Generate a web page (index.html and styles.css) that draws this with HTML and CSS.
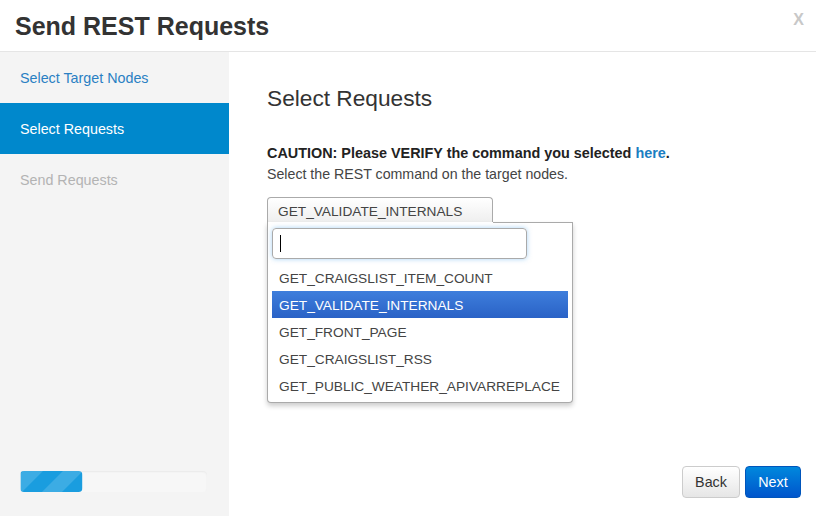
FILE: index.html
```html
<!DOCTYPE html>
<html>
<head>
<meta charset="utf-8">
<link rel="stylesheet" href="styles.css">
</head>
<body>
<div class="modal">
  <div class="header">
    <h1 class="title">Send REST Requests</h1>
    <span class="close">x</span>
  </div>
  <div class="body">
    <div class="sidebar">
      <div class="steps">
        <div class="step done">Select Target Nodes</div>
        <div class="step active">Select Requests</div>
        <div class="step todo">Send Requests</div>
      </div>
      <div class="progress"><div class="bar" style="width:33.4%"></div></div>
    </div>
    <div class="main">
      <h2 class="heading">Select Requests</h2>
      <p class="caution">CAUTION: Please VERIFY the command you selected <a class="link">here</a>.</p>
      <p class="hint">Select the REST command on the target nodes.</p>
      <div class="select">
        <div class="select-box">GET_VALIDATE_INTERNALS</div>
        <div class="drop">
          <div class="search"><span class="caret"></span></div>
          <ul class="options">
            <li>GET_CRAIGSLIST_ITEM_COUNT</li>
            <li class="hl">GET_VALIDATE_INTERNALS</li>
            <li>GET_FRONT_PAGE</li>
            <li>GET_CRAIGSLIST_RSS</li>
            <li>GET_PUBLIC_WEATHER_APIVARREPLACE</li>
          </ul>
        </div>
      </div>
      <div class="footer">
        <button class="btn back">Back</button>
        <button class="btn next">Next</button>
      </div>
    </div>
  </div>
</div>
</body>
</html>
```
FILE: styles.css
```css
html, body { margin: 0; padding: 0; }
body {
  width: 820px; height: 516px; overflow: hidden;
  font-family: "Liberation Sans", Arial, sans-serif;
  background: #fff; color: #333;
}
.modal { width: 816px; height: 516px; display: flex; flex-direction: column; }
.header {
  height: 51px; border-bottom: 1px solid #e5e5e5;
  display: flex; align-items: center; justify-content: space-between;
  padding: 0 12px 0 15px; box-sizing: content-box;
}
.title { margin: 0; font-size: 25px; font-weight: bold; color: #333; padding-top: 1px; }
.close { font-size: 16px; font-weight: bold; color: #c8c8c8; text-transform: uppercase; align-self: flex-start; margin-top: 11px; }
.body { flex: 1; display: flex; min-height: 0; }
.sidebar {
  width: 229px; background: #f4f4f4;
  display: flex; flex-direction: column; justify-content: space-between;
}
.step { height: 51px; line-height: 52px; padding-left: 20px; font-size: 14.3px; }
.step.done { color: #2a80c3; }
.step.active { background: #0088cc; color: #fff; }
.step.todo { color: #b3b3b3; }
.progress {
  margin: 0 22px 24px 20px; height: 21px; border-radius: 4px;
  background: #f7f7f7; box-shadow: inset 0 1px 2px rgba(0,0,0,0.06);
  overflow: hidden;
}
.bar {
  height: 100%; border-radius: 4px 0 0 4px;
  background-color: #1a9ddf;
  background-image: linear-gradient(45deg, rgba(255,255,255,0.15) 25%, transparent 25%, transparent 50%, rgba(255,255,255,0.15) 50%, rgba(255,255,255,0.15) 75%, transparent 75%, transparent);
  background-size: 40px 40px;
  transform: scaleX(-1);
}
.main { flex: 1; padding-left: 38px; display: flex; flex-direction: column; position: relative; }
.heading { margin: 33px 0 0; font-size: 22.7px; font-weight: normal; color: #333; line-height: 26px; }
.caution { margin: 33px 0 0; font-size: 14.4px; font-weight: bold; line-height: 18px; color: #222; }
.link { color: #1a7ec2; }
.hint { margin: 3px 0 0; font-size: 14.2px; color: #444; line-height: 18px; }
.select { position: relative; margin-top: 14px; width: 226px; }
.select-box {
  height: 25px; line-height: 28px; padding-left: 10px; font-size: 13.7px; color: #444;
  border: 1px solid #aaa; border-bottom: none; border-radius: 4px 4px 0 0;
  background: linear-gradient(#fff, #eee);
}
.drop {
  position: absolute; left: 0; top: 25px; width: 304px; height: 180px;
  border: 1px solid #aaa; border-top: none; border-radius: 0 0 4px 4px;
  background: #fff; box-shadow: 0 3px 5px rgba(0,0,0,0.2);
}
.drop::before {
  content: ""; position: absolute; left: 225px; right: -1px; top: 0; border-top: 1px solid #aaa;
}
.search {
  margin: 6px 0 0 4px; width: 253px; height: 29px; border: 1px solid #aaa; border-radius: 4px;
  box-shadow: 0 0 5px rgba(82,168,236,0.5);
  display: flex; align-items: center;
}
.caret { display: block; width: 1px; height: 17px; background: #000; margin-left: 7px; }
.options { list-style: none; margin: 5px 0 0 4px; padding: 0; width: 296px; }
.options li { height: 27px; line-height: 29px; padding-left: 7px; font-size: 13.7px; color: #444; overflow: hidden; }
.options li.hl { background: linear-gradient(#3e7edc, #2a62c6); color: #fff; }
.footer { margin-top: auto; display: flex; justify-content: flex-end; gap: 5px; padding: 0 15px 18px 0; }
.btn {
  height: 32px; font-family: "Liberation Sans", Arial, sans-serif; font-size: 14.3px;
  border-radius: 4px; cursor: pointer; padding: 0;
}
.back { width: 58px; color: #333; border: 1px solid #ccc; background: linear-gradient(#fff, #e6e6e6); }
.next { width: 56px; color: #fff; border: 1px solid #0055bb; background: linear-gradient(#0088dd, #0055cc); }
```
